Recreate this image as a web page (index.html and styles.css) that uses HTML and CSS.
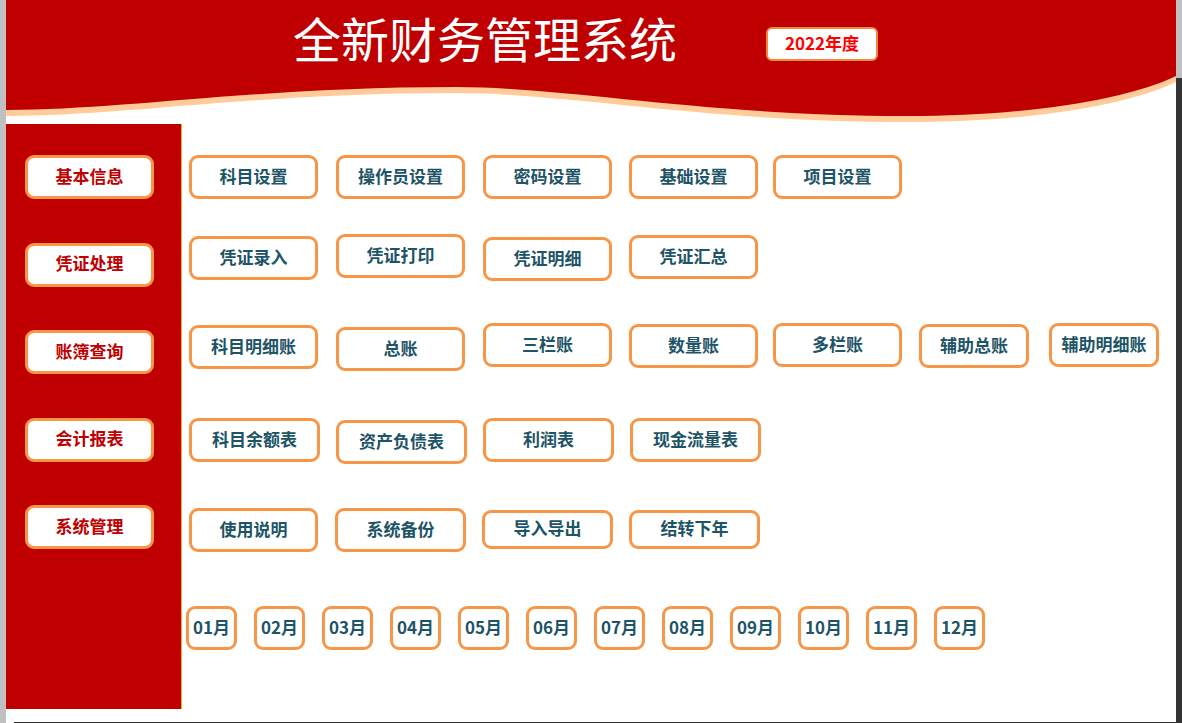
FILE: index.html
```html
<!DOCTYPE html>
<html lang="zh-CN">
<head>
<meta charset="utf-8">
<title>全新财务管理系统</title>
<link rel="stylesheet" href="styles.css">
</head>
<body>
<div class="screen">
  <div class="gutter-l"></div>
  <div class="page">
    <header class="banner">
      <svg class="wave" width="1170" height="124" viewBox="0 0 1170 124" aria-hidden="true">
        <path fill="#ffcc99" d="M0,0 H1170 V82 C1120,106 1020,122 900,122 C700,122 560,93 450,93 C250,93 120,116 0,116 Z"/>
        <path fill="#c00000" d="M0,0 H1170 V76 C1120,100 1020,116 900,116 C700,116 560,87 450,87 C250,87 120,110 0,110 Z"/>
      </svg>
      <h1 class="title">全新财务管理系统</h1>
      <div class="year">2022年度</div>
    </header>
    <div class="content">
      <nav class="side">
        <div class="sbtn">基本信息</div>
        <div class="sbtn">凭证处理</div>
        <div class="sbtn">账簿查询</div>
        <div class="sbtn">会计报表</div>
        <div class="sbtn">系统管理</div>
      </nav>
      <main class="menu">
        <div class="row r1">
          <div class="btn">科目设置</div>
          <div class="btn ml1">操作员设置</div>
          <div class="btn ml1">密码设置</div>
          <div class="btn">基础设置</div>
          <div class="btn mln2">项目设置</div>
        </div>
        <div class="row r2">
          <div class="btn o2">凭证录入</div>
          <div class="btn ml1">凭证打印</div>
          <div class="btn o3 ml1">凭证明细</div>
          <div class="btn o1">凭证汇总</div>
        </div>
        <div class="row r3">
          <div class="btn o2">科目明细账</div>
          <div class="btn o4 ml1">总账</div>
          <div class="btn ml1">三栏账</div>
          <div class="btn o1">数量账</div>
          <div class="btn mln2">多栏账</div>
          <div class="btn o1 w110">辅助总账</div>
          <div class="btn w110 ml3">辅助明细账</div>
        </div>
        <div class="row r4">
          <div class="btn w131">科目余额表</div>
          <div class="btn w131 o2">资产负债表</div>
          <div class="btn w131">利润表</div>
          <div class="btn w131">现金流量表</div>
        </div>
        <div class="row r5">
          <div class="btn">使用说明</div>
          <div class="btn w131 ml1">系统备份</div>
          <div class="btn w131 o2 short">导入导出</div>
          <div class="btn w131 o2 short">结转下年</div>
        </div>
        <div class="row months">
          <div class="mbtn">01月</div>
          <div class="mbtn">02月</div>
          <div class="mbtn">03月</div>
          <div class="mbtn">04月</div>
          <div class="mbtn">05月</div>
          <div class="mbtn">06月</div>
          <div class="mbtn">07月</div>
          <div class="mbtn">08月</div>
          <div class="mbtn">09月</div>
          <div class="mbtn">10月</div>
          <div class="mbtn">11月</div>
          <div class="mbtn">12月</div>
        </div>
      </main>
    </div>
    <div class="foot"></div>
  </div>
  <div class="gutter-r"></div>
</div>
</body>
</html>
```

FILE: styles.css
```css
html, body {
  margin: 0;
  padding: 0;
  background: #ffffff;
}

body {
  font-family: "Noto Sans CJK SC", "Noto Sans", sans-serif;
  width: 1182px;
  height: 723px;
  overflow: hidden;
}

.screen {
  display: flex;
  width: 1182px;
  height: 723px;
}

.gutter-l {
  width: 6px;
  flex: none;
  background: #c0c0c0;
}

.gutter-r {
  width: 6px;
  flex: none;
  background: linear-gradient(#c0c0c0 0, #c0c0c0 78px, #333333 78px, #333333 100%);
}

.page {
  width: 1170px;
  flex: none;
  display: flex;
  flex-direction: column;
  background: #ffffff;
}

.banner {
  position: relative;
  height: 124px;
  flex: none;
  display: flex;
  align-items: flex-start;
  padding-left: 287px;
  box-sizing: border-box;
}

.wave {
  position: absolute;
  left: 0;
  top: 0;
  z-index: 0;
}

.title {
  position: relative;
  z-index: 1;
  margin: 9px 0 0 0;
  font-size: 48px;
  line-height: 56px;
  font-weight: 400;
  color: #ffffff;
  letter-spacing: 0;
  white-space: nowrap;
}

.year {
  position: relative;
  z-index: 1;
  margin: 27px 0 0 89px;
  width: 112px;
  height: 34px;
  box-sizing: border-box;
  border: 2px solid #f0883e;
  border-radius: 6px;
  background: #ffffff;
  color: #ff0000;
  font-weight: 700;
  font-size: 17px;
  padding-bottom: 3px;
  display: flex;
  align-items: center;
  justify-content: center;
  letter-spacing: 0;
}

.content {
  display: flex;
  height: 585px;
  flex: none;
}

.side {
  flex: none;
  background: #c00000;
  border-right: 1px solid #f2b300;
  display: flex;
  flex-direction: column;
  gap: 43.5px;
  padding: 31px 0 0 19px;
  box-sizing: border-box;
  width: 176px;
}

.sbtn {
  width: 129px;
  height: 44px;
  box-sizing: border-box;
  border: 3px solid #f79646;
  border-radius: 9px;
  background: #ffffff;
  color: #c00000;
  font-weight: 700;
  font-size: 17px;
  padding-bottom: 4px;
  display: flex;
  align-items: center;
  justify-content: center;
}

.menu {
  flex: 1;
  padding-left: 7px;
  display: flex;
  flex-direction: column;
}

.row {
  display: flex;
  align-items: flex-start;
  gap: 17px;
  height: 44px;
  flex: none;
}

.r1 { margin-top: 31px; }
.r2 { margin-top: 35px; }
.r3 { margin-top: 45px; }
.r4 { margin-top: 51px; gap: 16px; }
.r5 { margin-top: 46px; gap: 16px; }
.months { margin-top: 54px; margin-left: -3px; }

.btn {
  width: 129px;
  height: 44px;
  flex: none;
  box-sizing: border-box;
  border: 3px solid #f79646;
  border-radius: 9px;
  background: #ffffff;
  color: #1d5466;
  font-weight: 700;
  font-size: 17px;
  padding-bottom: 4px;
  display: flex;
  align-items: center;
  justify-content: center;
  white-space: nowrap;
}

.w110 { width: 110px; }
.w131 { width: 131px; }
.ml1 { margin-left: 1px; }
.ml3 { margin-left: 3px; }
.mln2 { margin-left: -2px; }
.o1 { margin-top: 1px; }
.o2 { margin-top: 2px; }
.o3 { margin-top: 3px; }
.o4 { margin-top: 4px; }
.short { height: 39px; }

.mbtn {
  width: 51px;
  height: 44px;
  flex: none;
  box-sizing: border-box;
  border: 3px solid #f79646;
  border-radius: 9px;
  background: #ffffff;
  color: #1d5466;
  font-weight: 700;
  font-size: 17px;
  padding-bottom: 4px;
  display: flex;
  align-items: center;
  justify-content: center;
  white-space: nowrap;
}

.foot {
  flex: 1;
  border-bottom: 1px solid #333333;
  margin-left: 8px;
}
```
